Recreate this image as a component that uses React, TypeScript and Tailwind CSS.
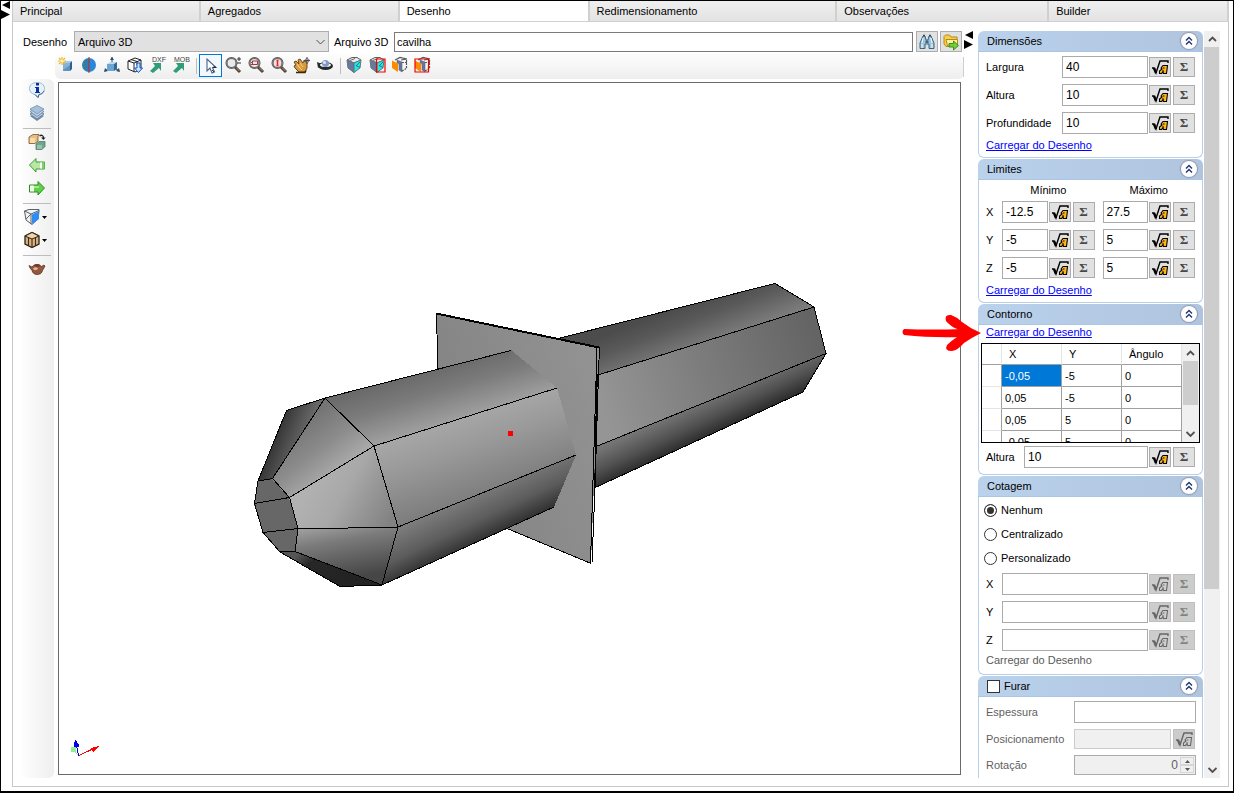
import type { ReactNode } from "react";

/* ------------------------------------------------------------------ icons */

function Icon({ children, size = "size-4" }: { children: ReactNode; size?: string }) {
  return (
    <svg viewBox="0 0 16 16" className={`${size} shrink-0 overflow-visible`} aria-hidden="true">
      {children}
    </svg>
  );
}

const NewBlockIcon = () => (
  <Icon>
    <path d="M5 6l2-2h7l-2 2z" fill="#9fcdea" />
    <path d="M5 6h7v8H5z" fill="#5f92bd" />
    <path d="M12 6l2-2v8l-2 2z" fill="#2f5f8d" />
    <path d="M5 6h7v2l-7 5z" fill="#83b4d8" />
    <path d="M4 0v8M0 4h8M1 1l6 6M7 1L1 7" stroke="#f0b429" strokeWidth="1.200" />
    <circle cx="4" cy="4" r="1.800" fill="#fff3a8" />
  </Icon>
);

const MirrorIcon = () => (
  <Icon>
    <path d="M8 1a7 7 0 000 14z" fill="#2f7fa8" />
    <path d="M8 1a7 7 0 010 14z" fill="#2a86d6" />
    <path d="M8 0v16" stroke="#c8202c" strokeWidth="1" />
  </Icon>
);

const OriginIcon = () => (
  <Icon>
    <path d="M8 0v6M1 14l4-3M15 14l-4-3" stroke="#2b3f55" strokeWidth="1" />
    <path d="M8 0l-2 3h4zM0 15l1-4 3 3zM16 15l-1-4-3 3z" fill="#34495e" />
    <path d="M3 7l3-2h7l-3 2z" fill="#b5dcf2" />
    <path d="M3 7h7v7H3z" fill="#6ba6d2" />
    <path d="M10 7l3-2v7l-3 2z" fill="#34679a" />
  </Icon>
);

const ImportCubeIcon = () => (
  <Icon>
    <path d="M1 4l7-3 6 2v9l-6 3-7-3zM1 4l6 2 7-3M7 6v9M4 2.500l6 2v4" fill="#fff" stroke="#222" strokeWidth="1" />
    <path d="M10 6h3v5h2.500l-4 4.500-4-4.500H10z" fill="#cfe6ff" stroke="#0a50d0" strokeWidth="1" />
  </Icon>
);

function ExportIcon({ label }: { label: string }) {
  return (
    <Icon>
      <text x="9" y="5" textAnchor="middle" fontSize="7" fontFamily="Liberation Sans, sans-serif" fill="#444">
        {label}
      </text>
      <path d="M0 14l5-5-2-3h8v8L9 11l-6 5z" fill="#2f9d77" />
    </Icon>
  );
}

const CursorIcon = () => (
  <Icon>
    <path d="M4 1v12l3-3 2 5 2.500-1-2-4.500H13z" fill="#fff" stroke="#4a6285" strokeWidth="1.100" />
    <path d="M11.500 8.500L13 9.500H10zM9 12l2 2" stroke="#1e2f4a" fill="#1e2f4a" />
  </Icon>
);

function Lens({ children, tint = "#e6eaec" }: { children?: ReactNode; tint?: string }) {
  return (
    <Icon>
      <path d="M10 10l5 5" stroke="#4d4035" strokeWidth="3" />
      <path d="M11 10.500l3.500 3.500" stroke="#b09a78" strokeWidth="1" />
      <circle cx="6.500" cy="6" r="5" fill={tint} stroke="#4c4c4c" strokeWidth="2" />
      <circle cx="6.500" cy="6" r="5" fill="none" stroke="#a5a5a5" strokeWidth="0.600" />
      {children}
    </Icon>
  );
}

const PanIcon = () => (
  <Icon>
    <path d="M0 5l2-1 3 3-1-4 2-1 3 4 1-2 3 1v6l-2 4H5L1 11 0 9l2-1z" fill="#d89a3c" stroke="#5d3a10" strokeWidth="0.900" />
    <path d="M2 15.500h9l1-2" stroke="#3d260a" strokeWidth="1.500" fill="none" />
    <path d="M4 9l4 4M6 6l3 4M3 7l3 4" stroke="#f7d58e" strokeWidth="1" />
    <path d="M13 0v7M9.500 3.500h6.500" stroke="#444" strokeWidth="1" />
    <circle cx="13" cy="3.500" r="2" fill="none" stroke="#666" strokeWidth="0.800" />
  </Icon>
);

const OrbitIcon = () => (
  <Icon>
    <ellipse cx="8.500" cy="9" rx="7.500" ry="4" fill="#26282c" />
    <path d="M0 5l5 2-4 4z" fill="#26282c" />
    <ellipse cx="8.500" cy="8" rx="5.500" ry="2" fill="#fff" />
    <circle cx="8.500" cy="6.500" r="3.500" fill="#7f9bc4" />
    <circle cx="7.500" cy="5.500" r="1.500" fill="#dbe8fa" />
  </Icon>
);

function SolidCube({ boxed = false }: { boxed?: boolean }) {
  return (
    <Icon>
      <path d="M1 3l5-2.500h5L15 3 8 6z" fill="#e9ebeb" stroke="#56605f" strokeWidth="1" />
      <path d="M1 3l7 3v9.500L2 11z" fill="#6878a2" stroke="#6b7370" strokeWidth="1" />
      <path d="M8 6l7-3-1 8-6 4.500z" fill="#12eef0" stroke="#6b7370" strokeWidth="1" />
      <path d="M4 3.500l5-2M10 9l4-4M10 8.500l4 2" stroke="#56605f" strokeWidth="0.900" />
      {boxed && <path d="M7.500 2h8.500v13H7.500z" fill="none" stroke="#f40000" strokeWidth="1.200" />}
    </Icon>
  );
}

function CutCube({ boxed = false }: { boxed?: boolean }) {
  return (
    <Icon>
      <path d="M3 3l5-2.500L15 2M9 3l6-1" fill="none" stroke="#555" strokeWidth="1.200" />
      <path d="M5 3l5 2v10l-3-2V7L5 6z" fill="#65759d" stroke="#5d6780" strokeWidth="0.600" />
      <path d="M10 5.500h5M10 14l5-3M14.500 3v8" stroke="#555" strokeWidth="1.200" strokeDasharray="2 1" />
      <path d="M0 3.500l6 3V15l-6-4z" fill="#ff8a00" />
      {boxed && <path d="M0 2h13.500v13H0z" fill="none" stroke="#f40000" strokeWidth="1.200" />}
    </Icon>
  );
}

const InfoIcon = () => (
  <Icon>
    <path d="M8 0.500c4.500 0 7.500 2.500 7.500 6s-3 6-5.500 6l-1 3-3-3C3 12 0.500 10 0.500 6.500s3-6 7.500-6z" fill="#e6f2fb" stroke="#9db9cf" strokeWidth="1" />
    <path d="M15 9c-1 2-3 3.500-5 3.500l-1 3-3-3" fill="none" stroke="#39608a" strokeWidth="1" />
    <path d="M7 1h3v2.500H7zM6 5h4v5h1v1H6v-1h1V6H6z" fill="#0d2f9c" />
  </Icon>
);

const LayersIcon = () => (
  <Icon>
    <path d="M1 11l7 5 7-5-7-4z" fill="#6c8aaa" />
    <path d="M1 9l7 5 7-5-7-4z" fill="#b4cade" stroke="#66839f" strokeWidth="0.900" />
    <path d="M1 6.500l7 5 7-5-7-4z" fill="#c4d6e6" stroke="#66839f" strokeWidth="0.900" />
    <path d="M1 4l7 5 7-5-7-3.500z" fill="#a7c0da" stroke="#7895b3" strokeWidth="0.900" />
  </Icon>
);

const SwapBlocksIcon = () => (
  <Icon>
    <path d="M0 3l4-2.500h6L9 2v5L6 9.500H0z" fill="#e8bd80" stroke="#8a6535" strokeWidth="0.900" />
    <path d="M1 4h5v5H1z" fill="#f7dcb0" />
    <path d="M7 10l3-2.500h6v5L13 15.500H7z" fill="#6ea58c" stroke="#4d7d68" strokeWidth="0.800" />
    <path d="M8 11h5v4H8z" fill="#95c4ac" />
    <path d="M10.500 2c2-1.500 4-.5 4 2" fill="none" stroke="#222" strokeWidth="1.300" />
    <path d="M12 3.500h4.500L14.500 6z" fill="#222" />
  </Icon>
);

const PrevIcon = () => (
  <Icon>
    <path d="M0.500 8L7 1.500V5h8.500v7H7v3z" fill="#b9e8a4" stroke="#3b9c34" strokeWidth="1" />
    <path d="M11 5.500h2v6h-2z" fill="#f6fff2" />
    <path d="M13 5.500h2.500v6H13z" fill="#7ed267" />
  </Icon>
);

const NextIcon = () => (
  <Icon>
    <path d="M15.500 8L9 1.500V5H0.500v7H9v3z" fill="#62cf48" stroke="#278d22" strokeWidth="1" />
    <path d="M1 5.500h4v6H1z" fill="#effbe9" />
    <path d="M5 6h5v2H5z" fill="#a4ec90" />
  </Icon>
);

const ViewCubeIcon = () => (
  <Icon>
    <path d="M0.500 2L5 0.500h10v2L14 10l-6 5.500-6-4.500z" fill="#f1f3f4" stroke="#5b6165" strokeWidth="1" />
    <path d="M0.500 2L7 5l8-3.500M7 5v10M2 10l5-5" fill="none" stroke="#5b6165" strokeWidth="1" />
    <path d="M8 5.500L15 2v8l-7 5z" fill="#2f8df2" />
  </Icon>
);

const CrateIcon = () => (
  <Icon>
    <path d="M1 4l7-3.500L15 4v8l-7 3.500L1 12z" fill="#d6b183" stroke="#2d2113" strokeWidth="1.300" />
    <path d="M1 4l7 3 7-3-7-3.500z" fill="#efd4a8" stroke="#2d2113" strokeWidth="1" />
    <path d="M8 7v8M4.500 5.500v8M11.500 5.500v8" stroke="#3d2c18" strokeWidth="1.100" />
  </Icon>
);

const TeapotIcon = () => (
  <Icon>
    <path d="M0 4.500l3 1.500C5 3 11 3 12.500 5.500L15 4l1 1-2.500 4.500c-.5 3-3 4-5.500 4s-4.500-1.500-5-4L1 7z" fill="#95583f" stroke="#4b281a" strokeWidth="0.700" />
    <ellipse cx="8" cy="4.500" rx="3" ry="1.400" fill="#6f3d2a" />
    <path d="M4 7.500c2-2 4-1.500 5 0-1 2-4 2.500-5 0z" fill="#e3b29c" />
  </Icon>
);

const BinocularsIcon = () => (
  <Icon>
    <path d="M4 2h2l1 4h2l1-4h2l3 7v5.500h-5V10H6v4.500H1V9z" fill="#9fc3da" stroke="#3d6480" strokeWidth="1" />
    <path d="M4 4l-1 5M12 4l1 5M3 10v4M13 10v4" stroke="#e8f5fd" strokeWidth="1.200" />
    <path d="M6.500 6.500h3v2.500h-3z" fill="#3d6480" />
    <path d="M4 1.500h2M10 1.500h2" stroke="#2b4a62" strokeWidth="1.500" />
  </Icon>
);

const FolderIcon = () => (
  <Icon>
    <path d="M1 2.500l1.500-1.500h4L8 3h6v9.500H3L1 10z" fill="#f7cf4a" stroke="#b58b15" strokeWidth="1" />
    <path d="M3 5.500h11.500V12H4.500z" fill="#fdeea0" stroke="#b58b15" strokeWidth="1" />
    <path d="M6 9.500h4.500V7l5 4.500-5 4.500v-3H6z" fill="#6fcf38" stroke="#35840f" strokeWidth="0.900" />
  </Icon>
);

function RootIcon({ disabled = false }: { disabled?: boolean }) {
  const line = disabled ? "#666" : "#000";
  return (
    <Icon>
      <path d="M0 9h2l2 5L8 2h8v2" fill="none" stroke={line} strokeWidth="1.400" />
      <path d="M2 9l2 5" stroke={line} strokeWidth="2.400" />
      <path
        d="M9 9l2-2.500h4.500L14.500 14.500h-3L11 13l-1.500 1.500H7.500V12L10 10z"
        fill={disabled ? "#cfcfcf" : "#ffb41e"}
        stroke={line}
        strokeWidth="1.100"
      />
      <path d="M11 9h1.500M10 12h2" stroke={line} strokeWidth="1" />
    </Icon>
  );
}

function Chevron({ up = false, thin = false }: { up?: boolean; thin?: boolean }) {
  return (
    <svg viewBox="0 0 9 6" className="h-1.5 w-[9px]" aria-hidden="true">
      <path d={up ? "M1 5l3.500-3.500L8 5" : "M0.500 1l4 4 4-4"} fill="none" stroke="#505050" strokeWidth={thin ? 1 : 1.8} />
    </svg>
  );
}

function SplitterGlyph() {
  return (
    <svg viewBox="0 0 9 18" className="h-[18px] w-[9px]" aria-hidden="true">
      <path d="M9 0v8L1 4zM0 9v9l9-4.500z" fill="#000" />
    </svg>
  );
}

/* --------------------------------------------------------------- controls */

const smallButton = "flex h-5 w-[22px] shrink-0 items-center justify-center border";

function FormulaButton({ disabled = false }: { disabled?: boolean }) {
  return (
    <button
      type="button"
      aria-label="Fórmula"
      disabled={disabled}
      className={`${smallButton} ${disabled ? "border-[#bfbfbf] bg-[#cccccc]" : "border-[#adadad] bg-[#e1e1e1]"}`}
    >
      <RootIcon disabled={disabled} />
    </button>
  );
}

function SumButton({ disabled = false }: { disabled?: boolean }) {
  return (
    <button
      type="button"
      disabled={disabled}
      className={`${smallButton} font-["Liberation_Serif",serif] text-[13px] font-bold leading-4 ${
        disabled ? "border-[#bfbfbf] bg-[#cccccc] text-[#838383]" : "border-[#adadad] bg-[#e1e1e1] text-[#484848]"
      }`}
    >
      Σ
    </button>
  );
}

function ValueField({ id, label, value = "", disabled = false }: { id: string; label: string; value?: string; disabled?: boolean }) {
  return (
    <div className="flex min-w-0 flex-1 items-center">
      <input
        id={id}
        aria-label={label}
        defaultValue={value}
        className="mr-px h-[22px] w-0 min-w-0 flex-1 border border-[#ababab] bg-white px-[3px] text-xs"
      />
      <div className="flex gap-0.5">
        <FormulaButton disabled={disabled} />
        <SumButton disabled={disabled} />
      </div>
    </div>
  );
}

function FieldRow({ id, label, labelWidth, value, disabled }: { id: string; label: string; labelWidth: string; value?: string; disabled?: boolean }) {
  return (
    <div className="flex items-center">
      <label htmlFor={id} className={`${labelWidth} shrink-0`}>
        {label}
      </label>
      <ValueField id={id} label={label} value={value} disabled={disabled} />
    </div>
  );
}

function LoadLink() {
  return (
    <a href="#desenho" className="text-[#0000ff] underline">
      Carregar do Desenho
    </a>
  );
}

function Section({ title, children, className = "" }: { title: ReactNode; children: ReactNode; className?: string }) {
  return (
    <section className="relative shrink-0">
      <header className="flex h-[21px] items-center justify-between rounded-t-md border-b border-[#a9c6e6] bg-linear-to-r from-[#bad2ec] to-[#b0c4de] pr-1.5 pl-[9px]">
        <h2>{title}</h2>
        <button
          type="button"
          aria-label="Recolher"
          className="flex size-4 items-center justify-center rounded-full bg-white shadow-[0_0_1px_1px_#8b97b0]"
        >
          <svg viewBox="0 0 8 10" className="h-2.5 w-2" aria-hidden="true">
            <path d="M1 4.500l3-3 3 3M1 8.500l3-3 3 3" fill="none" stroke="#22366f" strokeWidth="1.400" />
          </svg>
        </button>
      </header>
      <div className={`flex flex-col rounded-b-md border border-t-0 border-[#b7d0ea] bg-white px-[7px] ${className}`}>{children}</div>
    </section>
  );
}

function ToolButton({ name, children, selected = false }: { name: string; children: ReactNode; selected?: boolean }) {
  return (
    <button
      type="button"
      aria-label={name}
      className={`flex size-[23px] shrink-0 items-center justify-center ${
        selected ? "border border-[#0078d7] bg-[#f3f8fd]" : "pr-px pb-px"
      }`}
    >
      {children}
    </button>
  );
}

function MenuToolButton({ name, children }: { name: string; children: ReactNode }) {
  return (
    <button type="button" aria-label={name} className="flex h-[23px] shrink-0 items-center gap-0.5 pb-px pl-px">
      {children}
      <svg viewBox="0 0 5 3" className="h-[3px] w-[5px]" aria-hidden="true">
        <path d="M0 0h5L2.500 3z" fill="#000" />
      </svg>
    </button>
  );
}

const ToolSeparator = () => (
  <div className="flex h-[23px] w-1.5 items-center justify-center">
    <div className="h-4 w-px bg-[#bdbdbd]" />
  </div>
);

const SideSeparator = () => (
  <div className="flex h-1.5 items-center">
    <div className="h-px w-7 bg-[#bdbdbd]" />
  </div>
);

/* --------------------------------------------------------------- 3D scene */

type Shade = { id: string; from: [number, number]; to: [number, number]; stops: [number, string][] };

const shades: Shade[] = [
  { id: "rearTop", from: [690, 303], to: [706, 345], stops: [[0, "#4c4c4c"], [0.4, "#5a5a5a"], [1, "#7c7c7c"]] },
  { id: "rearMid", from: [600, 400], to: [815, 335], stops: [[0, "#959595"], [0.5, "#7b7b7b"], [1, "#646464"]] },
  { id: "rearLow", from: [700, 402], to: [716, 436], stops: [[0, "#747474"], [0.5, "#515151"], [1, "#242424"]] },
  { id: "plate", from: [440, 450], to: [600, 400], stops: [[0, "#838383"], [1, "#929292"]] },
  { id: "frontTop", from: [415, 374], to: [432, 430], stops: [[0, "#6a6a6a"], [0.4, "#7b7b7b"], [1, "#a2a2a2"]] },
  { id: "frontMid", from: [455, 416], to: [483, 498], stops: [[0, "#a8a8a8"], [0.4, "#999999"], [1, "#7c7c7c"]] },
  { id: "frontLow", from: [470, 496], to: [492, 542], stops: [[0, "#7b7b7b"], [0.5, "#5c5c5c"], [1, "#262626"]] },
  { id: "tipLeft", from: [268, 440], to: [306, 455], stops: [[0, "#2c2c2c"], [1, "#757575"]] },
  { id: "tipTop", from: [300, 425], to: [338, 475], stops: [[0, "#757575"], [0.5, "#8c8c8c"], [1, "#adadad"]] },
  { id: "tipMid", from: [310, 480], to: [388, 525], stops: [[0, "#b2b2b2"], [0.4, "#a8a8a8"], [1, "#828282"]] },
  { id: "tipLow", from: [330, 525], to: [340, 580], stops: [[0, "#9d9d9d"], [0.3, "#7b7b7b"], [1, "#464646"]] },
  { id: "tipBase", from: [300, 553], to: [330, 590], stops: [[0, "#555555"], [0.3, "#272727"], [1, "#232323"]] },
];

function Face({ shade, points }: { shade: string; points: string }) {
  return <polygon points={points} fill={`url(#${shade})`} />;
}

function Scene() {
  return (
    <svg viewBox="59 83 901 691" className="size-full" role="img" aria-label="cavilha" shapeRendering="crispEdges">
      <defs>
        {shades.map((s) => (
          <linearGradient key={s.id} id={s.id} gradientUnits="userSpaceOnUse" x1={s.from[0]} y1={s.from[1]} x2={s.to[0]} y2={s.to[1]}>
            {s.stops.map(([offset, color]) => (
              <stop key={offset} offset={offset} stopColor={color} />
            ))}
          </linearGradient>
        ))}
      </defs>

      <Face shade="rearTop" points="558,339 775,283 814,307 598,375" />
      <Face shade="rearMid" points="594,376 814,307 826,353 590,449" />
      <Face shade="rearLow" points="590,449 826,353 803,392 590,490" />
      <path d="M558 338.500L775 283.500 814 307 826 353.500 803 392 592 489M598 375L814 307M590 449L826 353.500" fill="none" stroke="#000" />

      <Face shade="plate" points="436,313 599,347 591,564 441,501" />
      <path d="M436.500 313L441 501 591 563.500" fill="none" stroke="#000" />
      <path d="M436 313.500L599 347.500" stroke="#000" strokeWidth="2" />
      <path d="M597 348L590.500 563M599.500 347L598.500 373 595 487 592 563" fill="none" stroke="#000" />
      <path d="M597 374L595 488" stroke="#000" strokeWidth="1.500" />

      <Face shade="frontTop" points="325,398 511,350 557,388 374,446" />
      <Face shade="frontMid" points="374,446 557,388 576,455 398,527" />
      <Face shade="frontLow" points="398,527 576,455 554,507 382,585" />
      <Face shade="tipLeft" points="286,411 325,398 272,479 258,481" />
      <Face shade="tipTop" points="325,398 374,446 289,498 272,479" />
      <Face shade="tipMid" points="374,446 398,527 298,529 289,498" />
      <Face shade="tipLow" points="298,529 398,527 382,585 295,552" />
      <Face shade="tipBase" points="295,552 382,585 340,587 280,552" />
      <polygon points="258,481 272,479 289,498 298,529 295,552 280,552 263,533 254,504" fill="#676767" />
      <g fill="none" stroke="#000">
        <path d="M511 350.500L325 398 286.500 410.500 258 481 254.500 503.500 263 532.500 280 552 340 586.500 382 585 554 507" />
        <path d="M325 398L374 446 398 527 382 585M374 446L557 388M398 527L576 455" />
        <path d="M258 481L272.500 478.500 289.500 497.500 298 528.500 295 551.500H280" />
        <path d="M325 398L272.500 478.500M374 446L289.500 497.500M398 527.500L298 528.500M382 585L295 551.500" />
        <path d="M254.500 503.500L289.500 497.500M263 532.500L298 528.500" />
      </g>
      <rect x="508" y="431" width="5" height="5" fill="#f00" />

      <rect x="71" y="747" width="5" height="5" fill="#90ee90" />
      <path d="M75 752l3 3" stroke="#90ee90" />
      <path d="M78.500 756L76 742" stroke="#0000f0" />
      <path d="M75 740h1l3 5v2h-5v-2z" fill="#0000f0" />
      <path d="M79 755.500L98 746.500" stroke="#f00" />
      <path d="M91 748l8-2-5 6-3-2z" fill="#f00" />
    </svg>
  );
}

/* ------------------------------------------------------------------- page */

const tabs = ["Principal", "Agregados", "Desenho", "Redimensionamento", "Observações", "Builder"];

const contour = [
  ["-0,05", "-5", "0"],
  ["0,05", "-5", "0"],
  ["0,05", "5", "0"],
  ["-0,05", "5", "0"],
];

const limits = [
  ["X", "-12.5", "27.5"],
  ["Y", "-5", "5"],
  ["Z", "-5", "5"],
];

function ContourGrid() {
  return (
    <div className="-mx-[5px] flex h-[100px] overflow-hidden border border-black">
      <div className="flex-1 overflow-hidden">
        <table className="w-full table-fixed border-separate border-spacing-0 text-left">
          <thead>
            <tr className="h-[21px]">
              <th className="w-5 border-r border-b border-r-[#e5e5e5] border-b-[#a0a0a0]" />
              {["X", "Y", "Ângulo"].map((name) => (
                <th key={name} className="border-r border-b border-r-[#e5e5e5] border-b-[#a0a0a0] p-0 pl-[7px] font-normal">
                  {name}
                </th>
              ))}
            </tr>
          </thead>
          <tbody>
            {contour.map((row, r) => (
              <tr key={r} className="h-[22px]">
                <td className="border-r border-b border-r-[#a0a0a0] border-b-[#e5e5e5] p-0" />
                {row.map((cell, c) => (
                  <td
                    key={c}
                    className={`border-r border-b border-[#a0a0a0] p-0 pl-[3px] ${r === 0 && c === 0 ? "bg-[#0078d7] text-white" : ""}`}
                  >
                    {cell}
                  </td>
                ))}
              </tr>
            ))}
          </tbody>
        </table>
      </div>
      <div className="flex w-[17px] flex-col items-center bg-[#f0f0f0]">
        <button type="button" aria-label="Subir" className="flex h-[17px] w-full shrink-0 items-center justify-center">
          <Chevron up />
        </button>
        <div className="h-11 w-[15px] bg-[#cdcdcd]" />
        <div className="flex-1" />
        <button type="button" aria-label="Descer" className="flex h-[17px] w-full shrink-0 items-center justify-center">
          <Chevron />
        </button>
      </div>
    </div>
  );
}

function Pointer() {
  return (
    <svg viewBox="900 313 80 40" className="pointer-events-none absolute top-[9px] -left-[77px] h-10 w-20" aria-hidden="true">
      <path d="M903 329Q900 332 903 335Q930 338 962 337L962 329Q930 330 903 329z" fill="#f00" />
      <path
        d="M945 321Q943 314 950 315Q956 317 961 322Q970 329 980 333Q970 338 963 343Q957 350 951 351Q943 351 946 345Q950 341 956 337L960 333L956 329Q949 326 945 321z"
        fill="#f00"
      />
    </svg>
  );
}

export default function App() {
  return (
    <div className="flex h-screen border border-b-2 border-black bg-white font-['Liberation_Sans',Arial,sans-serif] text-[11px] leading-4 text-black">
      <aside className="w-[11px] shrink-0">
        <SplitterGlyph />
      </aside>

      <div className="mr-1 mb-1 flex min-w-0 flex-1 flex-col">
        <nav className="grid h-[21px] shrink-0 grid-cols-[188fr_199fr_190fr_248fr_212fr_180fr] border-l border-[#c8c8c8]">
          {tabs.map((tab) => (
            <button
              key={tab}
              type="button"
              className={`border-r-2 border-b border-[#d0d0d0] pl-[7px] text-left ${
                tab === "Desenho" ? "bg-white" : "bg-linear-to-b from-[#efefef] to-[#e3e3e3]"
              }`}
            >
              {tab}
            </button>
          ))}
        </nav>

        <main className="flex min-h-0 flex-1 border-x border-b border-[#c8c8c8] pt-[9px] pr-2 pb-2 pl-[9px]">
          <div className="flex min-w-0 flex-1 flex-col">
            <div className="flex h-[21px] shrink-0 items-center pl-px">
              <label htmlFor="tipo" className="w-[51px]">
                Desenho
              </label>
              <div className="relative w-[255px]">
                <select id="tipo" className="block h-[21px] w-full appearance-none border border-[#adadad] bg-[#e1e1e1] pl-[3px]">
                  <option>Arquivo 3D</option>
                </select>
                <span className="pointer-events-none absolute top-2 right-1">
                  <Chevron thin />
                </span>
              </div>
              <label htmlFor="arquivo" className="w-[65px] pl-[5px]">
                Arquivo 3D
              </label>
              <input
                id="arquivo"
                defaultValue="cavilha"
                className="mr-[3px] h-5 min-w-0 flex-1 border border-[#7a7a7a] px-0.5"
              />
              <div className="flex gap-0.5 pr-0.5">
                <button type="button" aria-label="Procurar" className="flex h-[21px] w-[22px] items-center justify-center border border-[#adadad] bg-[#e1e1e1]">
                  <BinocularsIcon />
                </button>
                <button type="button" aria-label="Abrir" className="flex h-[21px] w-[22px] items-center justify-center border border-[#adadad] bg-[#e1e1e1]">
                  <FolderIcon />
                </button>
              </div>
            </div>

            <div
              role="toolbar"
              className="mt-0.5 ml-[33px] flex h-[25px] shrink-0 rounded-md bg-linear-to-b from-[#fdfdfd] to-[#eeeeee]"
            >
              <ToolButton name="Novo"><NewBlockIcon /></ToolButton>
              <ToolButton name="Espelhar"><MirrorIcon /></ToolButton>
              <ToolButton name="Origem"><OriginIcon /></ToolButton>
              <ToolButton name="Importar"><ImportCubeIcon /></ToolButton>
              <ToolButton name="Exportar DXF"><ExportIcon label="DXF" /></ToolButton>
              <ToolButton name="Exportar MOB"><ExportIcon label="MOB" /></ToolButton>
              <ToolSeparator />
              <ToolButton name="Selecionar" selected><CursorIcon /></ToolButton>
              <ToolButton name="Zoom">
                <Lens><path d="M12 2h4M14 0v4M12 6h4" stroke="#333" /></Lens>
              </ToolButton>
              <ToolButton name="Zoom janela">
                <Lens><path d="M4.500 4h5v3.500h-5zM3 7.500h3M3 5.500h2" fill="none" stroke="#b5303a" /></Lens>
              </ToolButton>
              <ToolButton name="Zoom total">
                <Lens tint="#f8dcda"><path d="M6.500 3v6M5.500 3.500h2M5.500 8.500h2" fill="none" stroke="#e0262c" strokeWidth="1.500" /></Lens>
              </ToolButton>
              <ToolButton name="Mover"><PanIcon /></ToolButton>
              <ToolButton name="Girar"><OrbitIcon /></ToolButton>
              <ToolSeparator />
              <ToolButton name="Sólido"><SolidCube /></ToolButton>
              <ToolButton name="Sólido com limites"><SolidCube boxed /></ToolButton>
              <ToolButton name="Corte"><CutCube /></ToolButton>
              <ToolButton name="Corte com limites"><CutCube boxed /></ToolButton>
              <div className="ml-auto h-5 w-px self-center bg-[#cfcfcf]" />
            </div>

            <div className="flex min-h-0 flex-1">
              <div
                role="toolbar"
                className="flex w-8 shrink-0 flex-col items-start rounded-md bg-linear-to-r from-[#fdfdfd] to-[#efefef] pl-px"
              >
                <div className="pl-[3px]">
                  <ToolButton name="Informações"><InfoIcon /></ToolButton>
                  <ToolButton name="Camadas"><LayersIcon /></ToolButton>
                </div>
                <SideSeparator />
                <div className="pl-[3px]">
                  <ToolButton name="Trocar"><SwapBlocksIcon /></ToolButton>
                  <ToolButton name="Anterior"><PrevIcon /></ToolButton>
                  <ToolButton name="Próximo"><NextIcon /></ToolButton>
                </div>
                <SideSeparator />
                <MenuToolButton name="Vista"><ViewCubeIcon /></MenuToolButton>
                <MenuToolButton name="Material"><CrateIcon /></MenuToolButton>
                <SideSeparator />
                <div className="pl-[3px]">
                  <ToolButton name="Renderizar"><TeapotIcon /></ToolButton>
                </div>
              </div>
              <div className="mt-[3px] mr-[3px] mb-[3px] ml-1 min-w-0 flex-1 border border-[#6a6a6a] bg-white">
                <Scene />
              </div>
            </div>
          </div>

          <div className="w-3.5 shrink-0">
            <SplitterGlyph />
          </div>

          <div className="flex w-[225px] shrink-0 flex-col gap-px overflow-y-clip">
            <Section title="Dimensões" className="pt-1 pb-1">
              <div className="flex flex-col gap-1.5 pb-[3px]">
                <FieldRow id="largura" label="Largura" labelWidth="w-[76px]" value="40" />
                <FieldRow id="altura" label="Altura" labelWidth="w-[76px]" value="10" />
                <FieldRow id="profundidade" label="Profundidade" labelWidth="w-[76px]" value="10" />
              </div>
              <LoadLink />
            </Section>

            <Section title="Limites" className="pt-0.5 pb-1">
              <div className="flex gap-2 pb-[3px] pl-4 text-center">
                <span className="flex-1">Mínimo</span>
                <span className="flex-1">Máximo</span>
              </div>
              <div className="flex flex-col gap-1.5 pb-[3px]">
                {limits.map(([axis, min, max]) => (
                  <div key={axis} className="flex items-center">
                    <label htmlFor={`min${axis}`} className="w-4">
                      {axis}
                    </label>
                    <div className="flex flex-1 gap-2">
                      <ValueField id={`min${axis}`} label={`${axis} mínimo`} value={min} />
                      <ValueField id={`max${axis}`} label={`${axis} máximo`} value={max} />
                    </div>
                  </div>
                ))}
              </div>
              <LoadLink />
            </Section>

            <Section title="Contorno" className="gap-[3px] pb-1.5">
              <Pointer />
              <div className="h-[15px] leading-[15px]">
                <LoadLink />
              </div>
              <ContourGrid />
              <FieldRow id="alturaContorno" label="Altura" labelWidth="w-[38px]" value="10" />
            </Section>

            <Section title="Cotagem" className="pt-px pb-1.5">
              <fieldset className="-ml-0.5 pb-[3px]">
                {["Nenhum", "Centralizado", "Personalizado"].map((name, i) => (
                  <label key={name} className="flex h-6 items-center gap-1">
                    <input
                      type="radio"
                      name="cotagem"
                      defaultChecked={i === 0}
                      className="size-[13px] appearance-none rounded-full border border-[#333] bg-white checked:bg-[#333] checked:shadow-[inset_0_0_0_2px_#fff]"
                    />
                    {name}
                  </label>
                ))}
              </fieldset>
              <div className="flex flex-col gap-1.5 pb-px">
                {["X", "Y", "Z"].map((axis) => (
                  <FieldRow key={axis} id={`cota${axis}`} label={axis} labelWidth="w-4" disabled />
                ))}
              </div>
              <span className="text-[#5a5a5a]">Carregar do Desenho</span>
            </Section>

            <Section
              title={
                <label className="flex items-center gap-1">
                  <input type="checkbox" className="size-[13px] appearance-none border border-[#333] bg-white" />
                  Furar
                </label>
              }
              className="gap-1.5 pt-1 pb-5 text-[#5f5f5f]"
            >
              <div className="-mr-px flex items-center">
                <label htmlFor="espessura" className="w-[88px]">
                  Espessura
                </label>
                <input id="espessura" className="h-[22px] w-0 min-w-0 flex-1 border border-[#ababab] bg-white px-[3px]" />
              </div>
              <div className="flex items-center">
                <label htmlFor="posicionamento" className="w-[88px]">
                  Posicionamento
                </label>
                <input id="posicionamento" disabled className="mr-0.5 h-5 w-0 min-w-0 flex-1 border border-[#cccccc] bg-[#f0f0f0]" />
                <FormulaButton disabled />
              </div>
              <div className="-mr-px flex items-center">
                <label htmlFor="rotacao" className="w-[88px]">
                  Rotação
                </label>
                <div className="flex h-5 flex-1 items-center border border-[#ababab] bg-[#f0f0f0] pr-px">
                  <input id="rotacao" disabled defaultValue="0" className="w-0 min-w-0 flex-1 pr-0.5 text-right text-xs" />
                  <div className="flex flex-col">
                    <button type="button" aria-label="Aumentar" disabled className="flex h-2 w-3.5 items-center justify-center border border-[#d5d5d5]">
                      <svg viewBox="0 0 5 3" className="h-[3px] w-[5px]"><path d="M0 3h5L2.500 0z" fill="#555" /></svg>
                    </button>
                    <button type="button" aria-label="Diminuir" disabled className="flex h-2 w-3.5 items-center justify-center border border-[#d5d5d5]">
                      <svg viewBox="0 0 5 3" className="h-[3px] w-[5px]"><path d="M0 0h5L2.500 3z" fill="#555" /></svg>
                    </button>
                  </div>
                </div>
              </div>
            </Section>
          </div>

          <div className="ml-px flex w-4 shrink-0 flex-col bg-[#f0f0f0]">
            <button type="button" aria-label="Rolar para cima" className="flex h-4 shrink-0 items-center justify-center">
              <Chevron up />
            </button>
            <div className="mr-px flex-[541] bg-[#cdcdcd]" />
            <div className="flex-[173]" />
            <button type="button" aria-label="Rolar para baixo" className="flex h-4 shrink-0 items-center justify-center">
              <Chevron />
            </button>
          </div>
        </main>
      </div>
    </div>
  );
}
